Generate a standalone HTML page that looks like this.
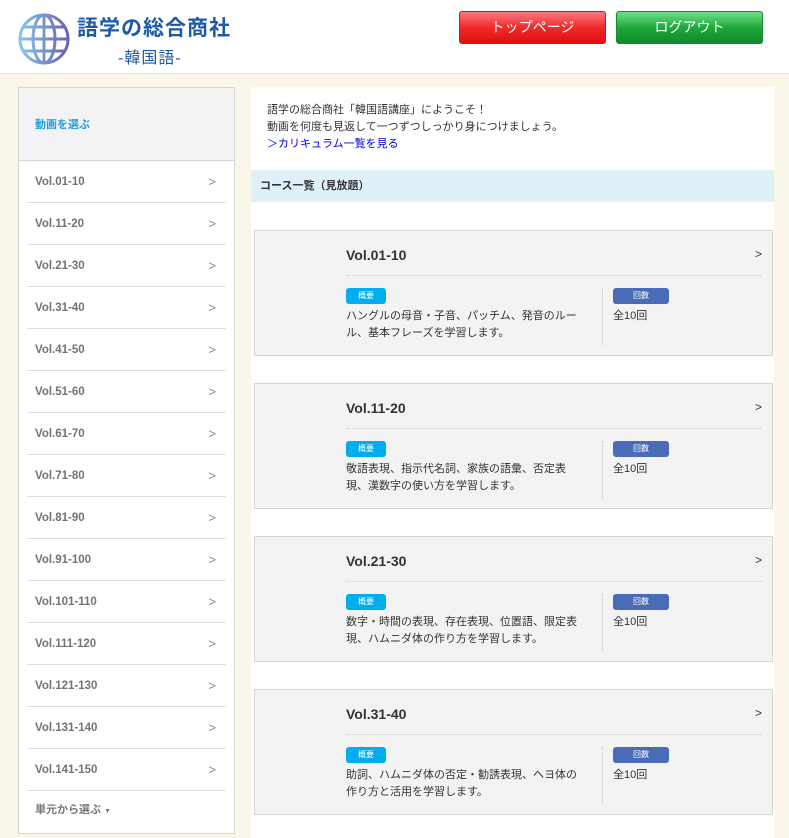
<!DOCTYPE html>
<html><head><meta charset="utf-8"><style>
*{margin:0;padding:0;box-sizing:border-box}
body{width:789px;height:838px;overflow:hidden;background:#faf6ea;font-family:"Liberation Sans","Noto Sans CJK JP",sans-serif;position:relative}
.hdr{position:absolute;left:0;top:0;width:789px;height:74px;background:#fff;border-bottom:1px solid #e8e2d2}
.btn{position:absolute;top:11px;width:147px;height:33px;border-radius:3px;color:#fff;font-size:14px;text-align:center;line-height:31px}
.side{position:absolute;left:18px;top:87px;width:217px;height:747px;background:#fff;border:1px solid #d6d6d6}
.sh{height:73px;background:#f3f3f3;border-bottom:1px solid #d6d6d6;color:#1ea0dc;font-size:11px;font-weight:bold;padding:28px 0 0 16px}
.it{margin:0 8px;height:42px;border-bottom:1px solid #ddd;position:relative;font-size:11.5px;font-weight:bold;color:#737373;line-height:42px;padding-left:8px}
.it span{position:absolute;right:10px;top:0;font-weight:normal;font-size:13px;color:#888}
.main{position:absolute;left:251px;top:87px;width:523px;height:751px;background:#fff}
.card{position:absolute;left:3px;width:519px;height:126px;background:#f3f3f3;border:1px solid #d6d6d6}
.t{position:absolute;left:91px;top:16px;font-size:14px;font-weight:bold;color:#333}
.ar{position:absolute;right:10px;top:16px;font-size:12px;color:#333}
.dl{position:absolute;left:91px;right:11px;top:44px;border-top:1px dotted #c8c8c8}
.b1{position:absolute;left:91px;top:57px;width:40px;height:16px;border-radius:3px;background:#00aeef;color:#fff;font-size:8px;text-align:center;line-height:16px}
.b2{position:absolute;left:358px;top:57px;width:56px;height:16px;border-radius:3px;background:#4a6cb8;color:#fff;font-size:8px;text-align:center;line-height:16px}
.vd{position:absolute;left:347px;top:57px;height:58px;border-left:1px dotted #c8c8c8}
.ds{position:absolute;left:91px;top:77px;width:240px;font-size:11px;line-height:17px;color:#333}
.n{position:absolute;left:358px;top:77px;font-size:11px;line-height:17px;color:#333}
</style></head><body>
<div class="hdr">
<svg style="position:absolute;left:18px;top:13px" width="52" height="52" viewBox="0 0 52 52"><defs><linearGradient id="g" gradientUnits="userSpaceOnUse" x1="2" y1="0" x2="50" y2="0"><stop offset="0" stop-color="#8ac4ee"/><stop offset="1" stop-color="#6a62b0"/></linearGradient></defs><g fill="none" stroke="url(#g)" stroke-width="3"><circle cx="26" cy="26" r="24"/><ellipse cx="26" cy="26" rx="11" ry="24"/><line x1="26" y1="2" x2="26" y2="50"/><line x1="2" y1="26" x2="50" y2="26"/><line x1="6" y1="14" x2="46" y2="14"/><line x1="6" y1="38" x2="46" y2="38"/></g></svg>
<div style="position:absolute;left:77px;top:12px;font-size:21px;font-weight:bold;color:#1e5aa8;letter-spacing:1px">語学の総合商社</div>
<div style="position:absolute;left:118px;top:44px;font-size:16px;color:#1e5aa8;letter-spacing:1px">-韓国語-</div>
<div class="btn" style="left:459px;background:linear-gradient(#fa7a80,#f02a2a 50%,#e01010);border:1px solid #c81818">トップページ</div>
<div class="btn" style="left:616px;background:linear-gradient(#6ee08a,#20a83c 50%,#108a2a);border:1px solid #1a8a30">ログアウト</div>
</div>
<div class="side">
<div class="sh">動画を選ぶ</div>
<div class="it">Vol.01-10<span>&gt;</span></div>
<div class="it">Vol.11-20<span>&gt;</span></div>
<div class="it">Vol.21-30<span>&gt;</span></div>
<div class="it">Vol.31-40<span>&gt;</span></div>
<div class="it">Vol.41-50<span>&gt;</span></div>
<div class="it">Vol.51-60<span>&gt;</span></div>
<div class="it">Vol.61-70<span>&gt;</span></div>
<div class="it">Vol.71-80<span>&gt;</span></div>
<div class="it">Vol.81-90<span>&gt;</span></div>
<div class="it">Vol.91-100<span>&gt;</span></div>
<div class="it">Vol.101-110<span>&gt;</span></div>
<div class="it">Vol.111-120<span>&gt;</span></div>
<div class="it">Vol.121-130<span>&gt;</span></div>
<div class="it">Vol.131-140<span>&gt;</span></div>
<div class="it">Vol.141-150<span>&gt;</span></div>
<div style="padding:10px 0 0 16px;font-size:11px;font-weight:bold;color:#777">単元から選ぶ <span style="font-size:7px">▼</span></div>
</div>
<div class="main">
<div style="position:absolute;left:16px;top:15px;font-size:11px;line-height:17px;color:#333">語学の総合商社「韓国語講座」にようこそ！<br>動画を何度も見返して一つずつしっかり身につけましょう。<br><span style="color:#0000ee">＞カリキュラム一覧を見る</span></div>
<div style="position:absolute;left:0;top:83px;width:523px;height:32px;background:#dff0f9;font-size:11px;font-weight:bold;color:#333;line-height:32px;padding-left:9px">コース一覧（見放題）</div>
<div class="card" style="top:143px"><div class="t">Vol.01-10</div><div class="ar">&gt;</div><div class="dl"></div><div class="b1">概要</div><div class="vd"></div><div class="b2">回数</div><div class="ds">ハングルの母音・子音、パッチム、発音のルール、基本フレーズを学習します。</div><div class="n">全10回</div></div>
<div class="card" style="top:296px"><div class="t">Vol.11-20</div><div class="ar">&gt;</div><div class="dl"></div><div class="b1">概要</div><div class="vd"></div><div class="b2">回数</div><div class="ds">敬語表現、指示代名詞、家族の語彙、否定表現、漢数字の使い方を学習します。</div><div class="n">全10回</div></div>
<div class="card" style="top:449px"><div class="t">Vol.21-30</div><div class="ar">&gt;</div><div class="dl"></div><div class="b1">概要</div><div class="vd"></div><div class="b2">回数</div><div class="ds">数字・時間の表現、存在表現、位置語、限定表現、ハムニダ体の作り方を学習します。</div><div class="n">全10回</div></div>
<div class="card" style="top:602px"><div class="t">Vol.31-40</div><div class="ar">&gt;</div><div class="dl"></div><div class="b1">概要</div><div class="vd"></div><div class="b2">回数</div><div class="ds">助詞、ハムニダ体の否定・勧誘表現、ヘヨ体の作り方と活用を学習します。</div><div class="n">全10回</div></div>
</div>
</body></html>
